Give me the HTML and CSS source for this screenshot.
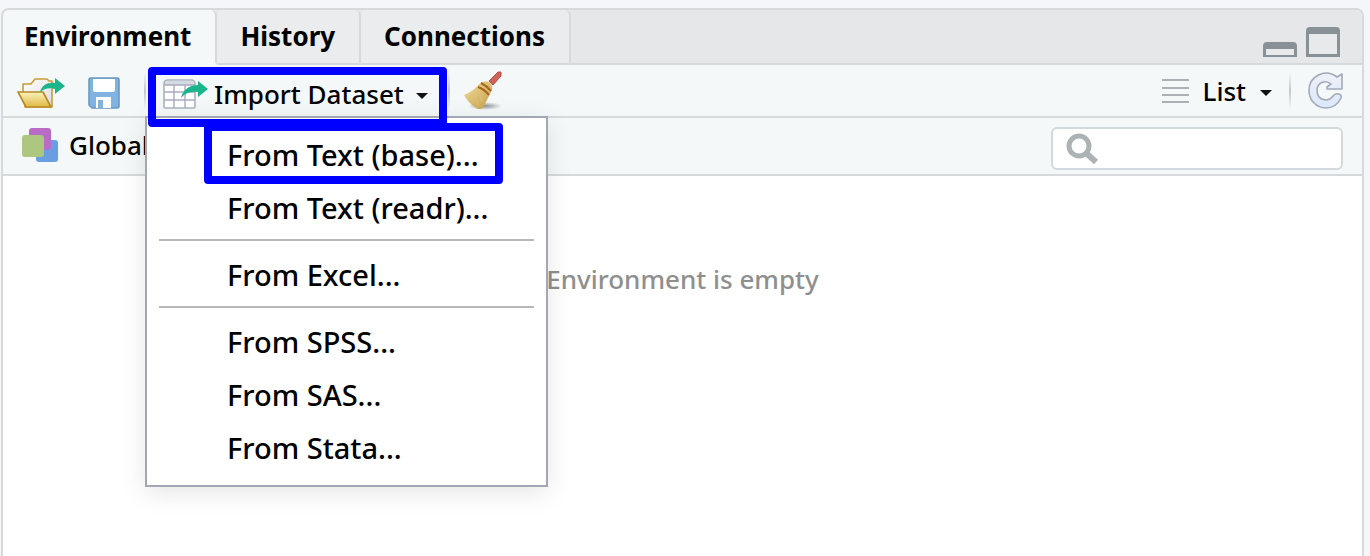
FILE: index.html
```html
<!DOCTYPE html>
<html lang="en">
<head>
<meta charset="utf-8">
<title>Environment</title>
<link rel="stylesheet" href="styles.css">
</head>
<body>
<main class="pane">
  <header class="tabbar">
    <nav class="tabs" role="tablist">
      <button class="tab tab-active" role="tab" aria-selected="true">Environment</button>
      <button class="tab" role="tab" aria-selected="false">History</button>
      <button class="tab" role="tab" aria-selected="false">Connections</button>
    </nav>
    <div class="window-controls">
      <button class="icon-button" aria-label="Minimize">
        <svg width="34" height="15" viewBox="0 0 34 15"><path d="M0 15V4Q0 0 4 0H30Q34 0 34 4V15Z" fill="#879196"/><path d="M3 7H31V13H3Z" fill="#e8e9eb"/></svg>
      </button>
      <button class="icon-button" aria-label="Maximize">
        <svg width="34" height="30" viewBox="0 0 34 30"><path d="M0 30V4Q0 0 4 0H30Q34 0 34 4V30Z" fill="#879196"/><path d="M3 7H31V27H3Z" fill="#e8e9eb"/></svg>
      </button>
    </div>
  </header>

  <div class="toolbar">
    <button class="icon-button open-button" aria-label="Load workspace">
      <svg width="48" height="32" viewBox="0 0 48 32">
        <defs>
          <linearGradient id="folder" x1="0" y1="0" x2="0" y2="1"><stop offset="0" stop-color="#fbf3bd"/><stop offset="1" stop-color="#dfb743"/></linearGradient>
          <linearGradient id="paper" x1="0" y1="0" x2="1" y2="1"><stop offset="0" stop-color="#fff"/><stop offset="1" stop-color="#dcdcdc"/></linearGradient>
        </defs>
        <path d="M6 14V7H14L18 2H30L32 4H35V30H8Z" fill="url(#paper)" stroke="#c99d3a" stroke-width="1.6" stroke-linejoin="round"/>
        <path d="M1 15H26L34 30H9Z" fill="url(#folder)" stroke="#b98a22" stroke-width="1.6" stroke-linejoin="round"/>
        <path d="M23 15C25 8 31 5 38 6V1L48 9L38 17V12C32 10 27 12 23 15Z" fill="#1bb58c"/>
      </svg>
    </button>
    <button class="icon-button save-button" aria-label="Save workspace">
      <svg width="32" height="32" viewBox="0 0 32 32">
        <path d="M3 1H29Q31 1 31 3V29Q31 31 29 31H4L1 28V3Q1 1 3 1Z" fill="#80b3df" stroke="#6899c4" stroke-width="1.6"/>
        <path d="M5 2H27V13Q27 15 25 15H7Q5 15 5 13Z" fill="#fff"/><path d="M8 20H23V31H8Z" fill="#fff"/><path d="M10 23H15V31H10Z" fill="#80b3df"/>
      </svg>
    </button>
    <span class="separator"></span>
    <div class="import">
      <button class="import-button" aria-haspopup="menu" aria-expanded="true">
        <svg width="45" height="32" viewBox="0 0 45 32">
          <path d="M1 29V6Q1 2 5 2H28Q32 2 32 6V29Q32 30 31 30H2Q1 30 1 29Z" fill="#fff" stroke="#a9b3be" stroke-width="1.6"/>
          <path d="M2 7V6Q2 3 5 3H28Q31 3 31 6V7Z" fill="#d3dae1"/>
          <path d="M1 7H32M1 14H32M1 22H32M11 7V30M22 7V30" stroke="#a9abc0" stroke-width="1.4"/>
          <path d="M18 20C20 11 27 7 35 7V3L45 11L35 19V14C28 13 22 15 18 20Z" fill="#1bb58c"/>
        </svg>
        <span>Import Dataset</span>
        <svg class="caret" width="12" height="6" viewBox="0 0 12 6"><path d="M0 0H12L6 6Z" fill="#111"/></svg>
      </button>
      <div class="menu" role="menu">
        <button class="menu-item menu-item-marked" role="menuitem">From Text (base)...</button>
        <button class="menu-item" role="menuitem">From Text (readr)...</button>
        <hr class="menu-rule">
        <button class="menu-item" role="menuitem">From Excel...</button>
        <hr class="menu-rule">
        <button class="menu-item" role="menuitem">From SPSS...</button>
        <button class="menu-item" role="menuitem">From SAS...</button>
        <button class="menu-item" role="menuitem">From Stata...</button>
      </div>
    </div>
    <span class="separator"></span>
    <button class="icon-button broom-button" aria-label="Clear objects">
      <svg width="38" height="39" viewBox="0 0 38 39">
        <defs>
          <linearGradient id="straw" x1="0" y1="0" x2="1" y2="1"><stop offset="0" stop-color="#f1dfa0"/><stop offset="1" stop-color="#c59d45"/></linearGradient>
          <radialGradient id="shade"><stop offset="0" stop-color="#8f9293"/><stop offset="1" stop-color="#8f9293" stop-opacity="0"/></radialGradient>
        </defs>
        <ellipse cx="21" cy="35" rx="17" ry="4" fill="url(#shade)"/>
        <path d="M25 10L34 1H37V5L29 14Z" fill="#cf625a" stroke="#b65049"/>
        <path d="M0 24Q10 20 15 13Q20 9 25 11Q29 14 28 19Q24 27 19 37Q15 39 12 37Q4 32 0 24Z" fill="url(#straw)"/>
        <path d="M6 26L10 32M11 25L15 35M15 22L18 31" stroke="#dcc07a" fill="none"/>
        <path d="M17 12Q23 15 27 20M14 16Q20 18 25 24" stroke="#a8651e" stroke-width="2" fill="none"/>
      </svg>
    </button>
    <div class="toolbar-right">
      <button class="list-button" aria-haspopup="menu">
        <svg width="27" height="26" viewBox="0 0 27 26"><path d="M0 2H27M0 10H27M0 17H27M0 24H27" stroke="#abb1b4" stroke-width="2"/></svg>
        <span>List</span>
        <svg class="caret" width="12" height="6" viewBox="0 0 12 6"><path d="M0 0H12L6 6Z" fill="#111"/></svg>
      </button>
      <span class="separator"></span>
      <button class="icon-button" aria-label="Refresh">
        <svg width="36" height="37" viewBox="0 0 36 37">
          <defs><linearGradient id="fresh" x1="0" y1="0" x2="0" y2="1"><stop offset="0" stop-color="#eef1f8"/><stop offset="1" stop-color="#dbe7fb"/></linearGradient></defs>
          <path d="M29 5L34 2V17H19V15L23 12C17 7 9 11 9 18.500C9 28 20 31 25 24Q27 21 31 22Q34 23 33 26C30 32 25 36 18 36C8 36 1 28 1 18.500C1 4 17 -4 29 5Z" fill="url(#fresh)" stroke="#a2a9b8" stroke-width="1.6" stroke-linejoin="round"/>
        </svg>
      </button>
    </div>
  </div>

  <div class="scopebar">
    <button class="scope-button">
      <svg width="36" height="34" viewBox="0 0 36 34"><rect x="14" y="12" width="22" height="22" rx="3" fill="#699fe2"/><rect x="7" width="22" height="22" rx="3" fill="#ba6bc8"/><rect y="7" width="22" height="22" rx="3" fill="#adc780"/></svg>
      <span>Global</span>
    </button>
    <label class="search">
      <svg width="33" height="31" viewBox="0 0 33 31"><circle cx="13" cy="13" r="10" fill="none" stroke="#adb2b5" stroke-width="5"/><path d="M20 20L30 29" stroke="#adb2b5" stroke-width="6"/></svg>
      <input class="search-input" type="text" aria-label="Search environment">
    </label>
  </div>

  <section class="content"><p class="empty">Environment is empty</p></section>
</main>
</body>
</html>
```
FILE: styles.css
```css
* { box-sizing: border-box; }
body {
  margin: 0;
  min-height: 100vh;
  padding: 8px 6px 0 1px;
  display: flex;
  background: #f5f6f9;
  color: #000;
  font-family: "Noto Sans", sans-serif;
  font-size: 26px;
  font-weight: 500;
  line-height: 36px;
}
button { margin: 0; padding: 0; border: 0; background: none; color: inherit; font: inherit; white-space: nowrap; }
svg { display: block; flex: none; }
.pane {
  flex: 1;
  display: flex;
  flex-direction: column;
  border: 2px solid #d6dadc;
  border-bottom: 0;
  border-radius: 8px 8px 0 0;
  background: #fff;
}
.tabbar {
  display: flex;
  justify-content: space-between;
  height: 55px;
  background: #e6e7e9;
  border-radius: 6px 6px 0 0;
}
.tabs { display: flex; }
.tab {
  padding: 0 24px 2px 23px;
  border-right: 2px solid #d6dadc;
  border-bottom: 2px solid #d6dadc;
  border-radius: 6px 6px 0 0;
  background: #ebecee;
  font-size: 26px;
  font-weight: 700;
}
.tab-active { padding-left: 21px; border-bottom-color: #f4f8f9; background: #f4f8f9; }
.window-controls {
  flex: 1;
  display: flex;
  justify-content: flex-end;
  align-items: flex-end;
  gap: 9px;
  padding: 0 22px 6px 0;
  border-bottom: 2px solid #d6dadc;
}
.toolbar {
  display: flex;
  align-items: center;
  height: 53px;
  padding: 0 18px 0 14px;
  border-bottom: 2px solid #d6dadc;
  background: #f4f8f9;
}
.open-button, .save-button { margin-top: 4px; }
.save-button { margin-right: 24px; margin-left: 23px; }
.separator { width: 2px; height: 38px; background: linear-gradient(transparent, #c5c8ca, transparent); }
.import { position: relative; margin: 12px 1px 0 2px; z-index: 1; }
.import-button {
  position: relative;
  z-index: 1;
  display: flex;
  align-items: center;
  gap: 6px;
  width: 299px;
  height: 60px;
  padding: 0 11px 5px 7px;
  border: 8px solid #00f;
  border-radius: 4px;
}
.import-button .caret { margin: 4px 0 0 auto; }
.menu {
  position: absolute;
  top: 49px;
  left: -3px;
  width: 403px;
  padding: 5px 12px 12px;
  border: 2px solid #a3a6b4;
  background: #fff;
  box-shadow: 0 6px 24px rgba(0, 0, 0, 0.1);
  font-size: 29px;
}
.menu-item { display: block; width: 100%; height: 53px; padding: 4px 0 0 68px; text-align: left; }
.menu-item-marked {
  width: 299px;
  height: 61px;
  margin: 0 0 -4px 45px;
  padding: 4px 0 0 15px;
  border: 8px solid #00f;
  border-radius: 4px;
}
.menu-rule { height: 2px; margin: 6px 0; border: 0; background: #b8b8b8; }
.broom-button { margin: 0 0 1px 14px; }
.toolbar-right { display: flex; align-items: center; gap: 17px; margin-left: auto; }
.list-button { display: flex; align-items: center; gap: 14px; }
.list-button .caret { margin-top: 4px; }
.scopebar {
  display: flex;
  align-items: center;
  justify-content: space-between;
  height: 58px;
  padding: 0 19px;
  border-bottom: 2px solid #d6dadc;
  background: #f4f8f9;
}
.scope-button { display: flex; align-items: center; gap: 11px; padding-bottom: 3px; }
.search {
  display: flex;
  align-items: center;
  width: 292px;
  height: 43px;
  margin-top: 4px;
  padding: 0 13px;
  border: 2px solid #d3dadd;
  border-radius: 6px;
  background: #fff;
}
.search-input { flex: 1; min-width: 0; border: 0; outline: 0; background: none; font: inherit; }
.content { flex: 1; padding-top: 85px; }
.empty { margin: 0; color: #8f8f8f; text-align: center; }
```
